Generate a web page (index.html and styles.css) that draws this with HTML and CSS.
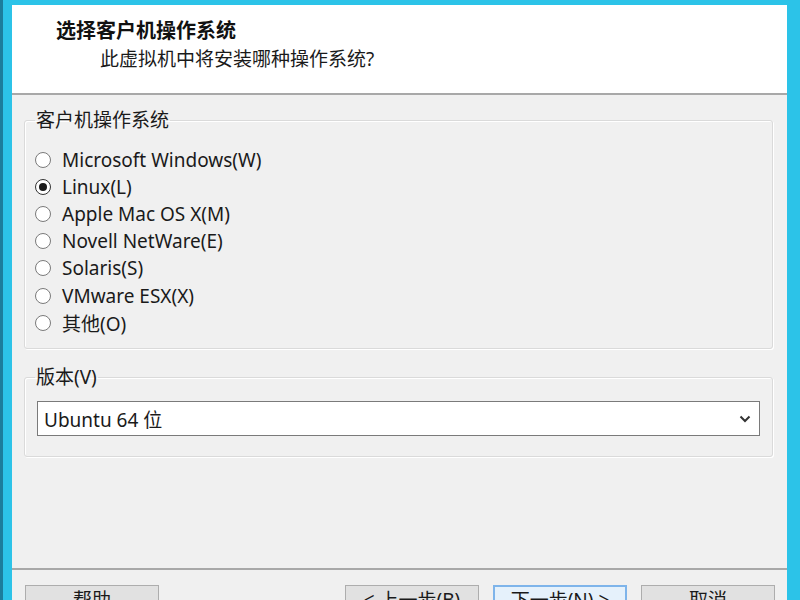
FILE: index.html
```html
<!DOCTYPE html>
<html lang="zh-CN">
<head>
<meta charset="utf-8">
<title>新建虚拟机向导</title>
<link rel="stylesheet" href="styles.css">
</head>
<body>
<div class="frame">
  <div class="dialog">
    <div class="header">
      <div class="title">选择客户机操作系统</div>
      <div class="subtitle">此虚拟机中将安装哪种操作系统?</div>
    </div>
    <div class="main">
      <fieldset class="group group-os">
        <legend>客户机操作系统</legend>
        <div class="radio-list">
          <div class="radio"><span class="dot"></span><span>Microsoft Windows(W)</span></div>
          <div class="radio checked"><span class="dot"></span><span>Linux(L)</span></div>
          <div class="radio"><span class="dot"></span><span>Apple Mac OS X(M)</span></div>
          <div class="radio"><span class="dot"></span><span>Novell NetWare(E)</span></div>
          <div class="radio"><span class="dot"></span><span>Solaris(S)</span></div>
          <div class="radio"><span class="dot"></span><span>VMware ESX(X)</span></div>
          <div class="radio"><span class="dot"></span><span>其他(O)</span></div>
        </div>
      </fieldset>
      <fieldset class="group group-ver">
        <legend>版本(V)</legend>
        <div class="select">
          <span>Ubuntu 64 位</span>
          <svg class="chev" width="12" height="8" viewBox="0 0 12 8"><path d="M1.5 1.5 L6 6 L10.5 1.5" fill="none" stroke="#333" stroke-width="2"/></svg>
        </div>
      </fieldset>
    </div>
    <div class="footer">
      <button class="btn">帮助</button>
      <button class="btn push">&lt; 上一步(B)</button>
      <button class="btn focus">下一步(N) &gt;</button>
      <button class="btn">取消</button>
    </div>
  </div>
</div>
</body>
</html>
```
FILE: styles.css
```css
html, body {
  margin: 0;
  padding: 0;
  height: 600px;
  overflow: hidden;
  background: #2cc3e8;
}
.frame {
  height: 600px;
  box-sizing: border-box;
  padding: 5px 13px 0 9px;
  border-left: 3px solid #1c7d9c;
  font-family: "Noto Sans", "Noto Sans CJK SC", sans-serif;
  color: #1a1a1a;
}
.dialog {
  height: 595px;
  background: #f0f0f0;
  display: flex;
  flex-direction: column;
  overflow: hidden;
}
.header {
  height: 90px;
  flex: none;
  box-sizing: border-box;
  background: #fff;
  border-bottom: 2px solid #a8a8a8;
  padding: 14px 0 0 44px;
}
.title {
  font-size: 20px;
  line-height: 24px;
  font-weight: bold;
  color: #111;
}
.subtitle {
  font-size: 19px;
  line-height: 24px;
  margin-top: 4px;
  padding-left: 44px;
}
.main {
  flex: 1;
  padding: 0 14px 0 12px;
}
.group {
  margin: 0;
  border: 1px solid #dadada;
  border-radius: 3px;
  padding: 0 10px;
  box-shadow: inset 1px 1px 0 #fff, 1px 1px 0 #fff;
}
.group legend {
  font-size: 19px;
  line-height: 22px;
  padding: 0 1px;
}
.group-os {
  margin-top: 14px;
  padding-bottom: 12px;
}
.radio-list {
  margin-top: 15px;
  display: flex;
  flex-direction: column;
}
.radio {
  display: flex;
  align-items: center;
  height: 27.2px;
  font-size: 19px;
}
.dot {
  width: 16px;
  height: 16px;
  box-sizing: border-box;
  border: 1px solid #7a7a7a;
  border-radius: 50%;
  background: #fff;
  margin-right: 11px;
  display: flex;
  align-items: center;
  justify-content: center;
  flex: none;
}
.radio.checked .dot {
  border-color: #333;
}
.radio.checked .dot::after {
  content: "";
  width: 8px;
  height: 8px;
  border-radius: 50%;
  background: #1a1a1a;
}
.group-ver {
  margin-top: 17px;
  padding-bottom: 20px;
}
.select {
  margin: 13px 2px 0 2px;
  height: 35px;
  box-sizing: border-box;
  border: 1px solid #7a7a7a;
  background: #fff;
  display: flex;
  align-items: center;
  justify-content: space-between;
  padding: 0 8px 0 6px;
  font-size: 19px;
}
.footer {
  flex: none;
  height: 32px;
  box-sizing: border-box;
  border-top: 2px solid #a8a8a8;
  display: flex;
  padding: 15px 12px 0 13px;
  gap: 14px;
}
.btn {
  flex: none;
  width: 134px;
  height: 30px;
  box-sizing: border-box;
  border: 1px solid #adadad;
  background: #e1e1e1;
  font-family: "Noto Sans", "Noto Sans CJK SC", sans-serif;
  font-size: 19px;
  line-height: 26px;
  color: #1a1a1a;
  padding: 0;
  align-self: flex-start;
}
.btn.push {
  margin-left: auto;
}
.btn.focus {
  border: 2px solid #7eb4ea;
  background: #e5f1fb;
}
```
